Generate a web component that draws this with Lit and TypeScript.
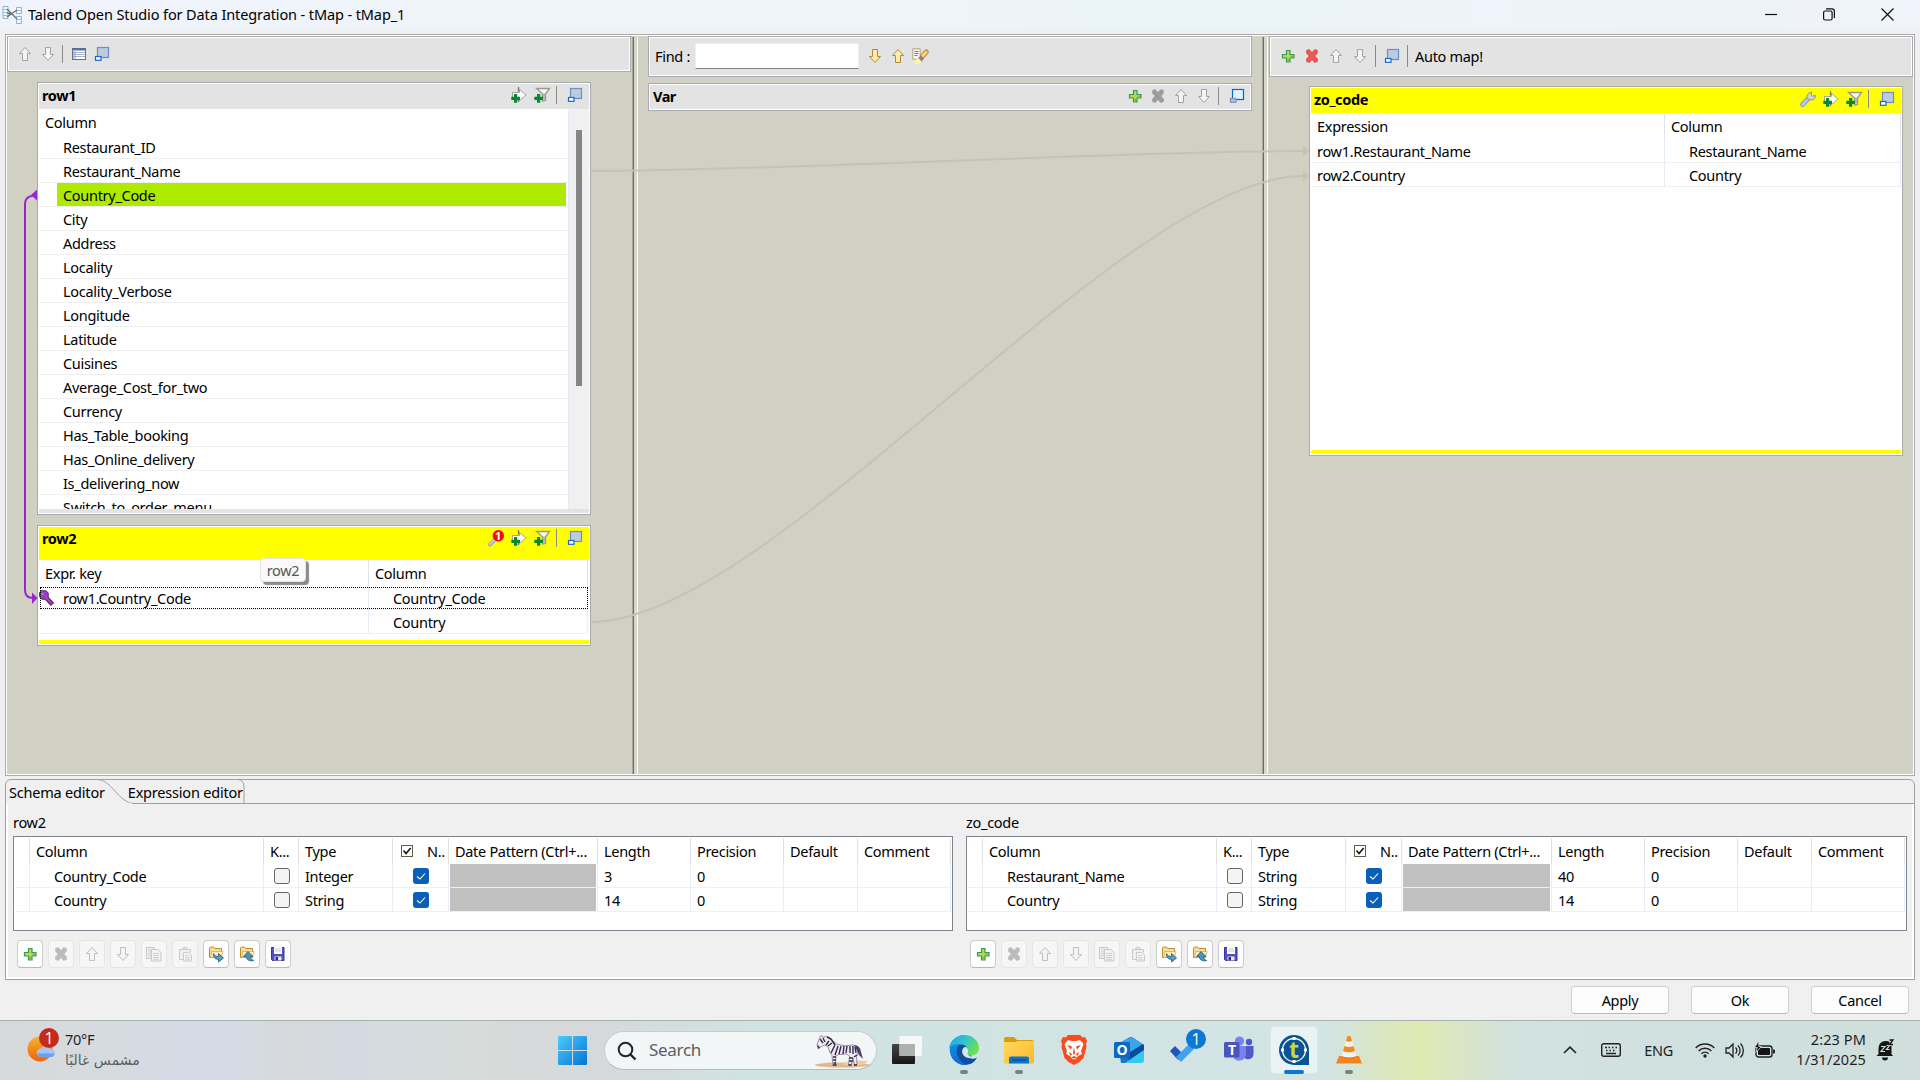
import { LitElement, html, svg, css, nothing, type TemplateResult, type SVGTemplateResult } from "lit";
import { customElement } from "lit/decorators.js";
import { classMap } from "lit/directives/class-map.js";

const icon = (body: SVGTemplateResult, w = 16, h = 16, box = `0 0 ${w} ${h}`) =>
  html`<svg class="ic" width=${w} height=${h} viewBox=${box}>${body}</svg>`;

const UP = "M8 1.5 13.5 7.5H10.5V14.5H5.5V7.5H2.5Z";
const DOWN = "M8 14.5 13.5 8.5H10.5V1.5H5.5V8.5H2.5Z";
const arrow = (d: string, fill = "#f4f4f4", stroke = "#a2a2a2") =>
  icon(svg`<path d=${d} fill=${fill} stroke=${stroke}/>`);
const upGray = () => arrow(UP);
const downGray = () => arrow(DOWN);
const upGold = () => arrow(UP, "#ffedb0", "#b8862b");
const downGold = () => arrow(DOWN, "#ffedb0", "#b8862b");

const plus = () => icon(svg`
  <path d="M6.500 2.500h3.500v4h4v3.500h-4v4H6.500v-4H2.500V6.500h4z" fill="#b9d84c" stroke="#3a9a5a" stroke-width="1.200"/>
  <path d="M8.200 11v2.500M10.500 8.300h3" stroke="#7db53f" stroke-width="1.500"/>`);
const CROSS = "M2.500 2.500 5.200 1.500 8 4.500 10.800 1.500 13.500 2.500 13.200 5.500 10.800 8 13.500 11 13.500 13.500 10.600 14.500 8 11.500 5.400 14.500 2.500 13.500 2.500 11 5.200 8 2.700 5.500Z";
const cross = (fill: string, stroke: string) => icon(svg`<path d=${CROSS} fill=${fill} stroke=${stroke} stroke-width=".7"/>`);
const restore = (bright = false) => icon(svg`
  <rect x="3.500" y="1.500" width="11" height="10" fill=${bright ? "#e0f2ff" : "#bccbe0"} stroke=${bright ? "#0b62d6" : "#6a8fc0"} stroke-width="1.200"/>
  <rect x="1.500" y="10.500" width="5.500" height="3.800" fill=${bright ? "#b4c1d6" : "#fff"} stroke=${bright ? "#7f93b5" : "#1668d0"} stroke-width="1.200"/>`);
const tableIcon = () => icon(svg`
  <rect x="1.500" y="2.500" width="13" height="11" fill="#fff" stroke="#61748f"/>
  <path d="M1 2.500h14v2H1z" fill="#53719b"/><path d="M2 4.500h3v8.500H2z" fill="#c5d2e6"/>
  <path d="M2 6.500h12M2 8.500h12M2 10.500h12" stroke="#8c9fbb" stroke-width=".8"/>`);
const GREEN = svg`<path d="M3 7h3.200v2.800H9V13H6.200v2.800H3V13H.3V9.800H3z" fill="#078a2e"/>`;
const addExpr = () => icon(svg`
  <path d="M1.500 5.500h7v-3L15 8l-6.500 5.500v-3h-7z" fill="#fff" stroke="#a3a39a"/>
  <path d="M7.500 0v4.500M7.500 12v3" stroke="#777" stroke-width="1.300"/>${GREEN}`);
const funnel = () => icon(svg`
  <path d="M2.500 1.500h13l-4 5.500v6.500l-3 .5V7z" fill="#f6f6f6" stroke="#99998f" stroke-width="1.300"/>
  <path d="M9 6.500h2v6H9z" fill="#b5b5b5"/>${GREEN}`);
const wrench = () => icon(svg`
  <path d="M2.500 13.500 8 8" stroke="#7f9bd6" stroke-width="4.800" stroke-linecap="round"/>
  <path d="M2.500 13.500 8 8" stroke="#b6c8f2" stroke-width="3" stroke-linecap="round"/>
  <path d="M7 7.500c-.6-3 1.200-6 4.500-6.500L11 3.800l1.600 1.400 3-.7c0 3.300-2.500 5-5.600 4.300z" fill="#d4d4cf" stroke="#90908a"/>`);
const wrenchBadge = () => html`<span class="badged">${icon(svg`
  <path d="M2 14.500 8 8.500" stroke="#8c9ac4" stroke-width="3.800" stroke-linecap="round"/>
  <path d="M2 14.300 8 8.300" stroke="#c5cde0" stroke-width="2.200" stroke-linecap="round"/>
  <circle cx="10.300" cy="5.800" r="5.700" fill="#f20d0d"/>`)}<b>1</b></span>`;
const highlighter = () => icon(svg`
  <path d="M.8.8h7.400v10.400H.8z" fill="#f2f5fb" stroke="#b7a46c"/>
  <path d="M2.500 3.500h4M2.500 5.500h4M2.500 7.500h3" stroke="#5d7fb5"/>
  <path d="M10.500 8 14.300 4" stroke="#c9852b" stroke-width="5" stroke-linecap="round"/>
  <path d="M10.700 7.600 14.100 4.200" stroke="#f8d38e" stroke-width="3" stroke-linecap="round"/>
  <path d="M6 10 9 7.500l3 3L9.500 14z" fill="#8d8378"/><path d="M1 15.500 6 9.500l3.500 4-2 2z" fill="#fff3a8"/>`, 17, 16);
const folderArrow = (up: boolean) => icon(svg`
  <path d="M1.500 11.500v-9.500l1-1h3l1.200 1.500h6.800v9z" fill="#f9dc98" stroke="#c08a2e"/>
  <path d="M3.500 5.500h11.500l-1.500 6h-10.500z" fill="#fdeebf" stroke="#d7a64c" stroke-width=".7"/>
  ${up
    ? svg`<path d="M9 5.500 14 10.500H11.500c0 2 1 3 3.200 4-4.200 1-7.200-.5-7.400-4H4.500z" fill="#4d93b8" stroke="#1d587c" stroke-width=".8"/>`
    : svg`<path d="M5.500 7.500c.5 2 2.500 3 5 3V7.500l5 4.500-5 4v-2.600C7 13.200 5 11 5.500 7.500z" fill="#5a9ebd" stroke="#1d587c" stroke-width=".8"/>`}`);
const save = () => icon(svg`
  <path d="M1.500 1.500h12.500v13h-11.500l-1-1z" fill="#5450c4" stroke="#38349c"/>
  <path d="M4 1h8v7H4z" fill="#fff"/><path d="M5 3h6M5 5h6" stroke="#c7c7d2"/>
  <path d="M4.500 10.500h7v4h-7z" fill="#e9e9f4"/><path d="M5.500 11h2.500v3.500H5.500z" fill="#2e2b86"/>`);
const copy = () => icon(svg`
  <path d="M6.500 12.500h-6v-11h8v2" fill="#eee" stroke="#b0b0b0"/><path d="M2 4h3M2 6h3M2 8h3M2 10h3" stroke="#bbb"/>
  <path d="M5.500 3.500h6.500l3 3v8.500H5.500z" fill="#f2f2f2" stroke="#b0b0b0"/><path d="M7 7.500h6M7 9.500h6M7 11.500h6M7 13.300h6" stroke="#bbb"/>`);
const paste = () => icon(svg`
  <path d="M6 13.500H2.500v-10h11v3" fill="#eee" stroke="#b4b4b4"/><path d="M5.500 3.500c0-3 5-3 5 0z" fill="#ddd" stroke="#b4b4b4"/>
  <path d="M6.500 6.500h5l3 2.500v6h-8z" fill="#f4f4f4" stroke="#b4b4b4"/><path d="M8 9.500h4M8 11.500h5M8 13.300h5" stroke="#c0c0c0"/>`);
const key = () => icon(svg`
  <path d="M6.500 7 13.500 14.500" stroke="#4b1d3c" stroke-width="4.400"/>
  <path d="M2 .8h5l2.200 2v4.500L7 9.200H3L.6 7V2.500z" fill="#9b3fc6" stroke="#5c2763"/>
  <path d="M6.500 7 13 14" stroke="#b43bd6" stroke-width="2.400"/><path d="M2.500 3h2v2h-2z" fill="#c07be0"/>`);

const sep = html`<i class="sep"></i>`;
const cell = (c: TemplateResult) => html`<span class="tool">${c}</span>`;

interface Field { name: string; type: string; length: string; }
interface Schema { title: string; fields: Field[]; }

const ROW1 = ["Restaurant_ID", "Restaurant_Name", "Country_Code", "City", "Address", "Locality", "Locality_Verbose",
  "Longitude", "Latitude", "Cuisines", "Average_Cost_for_two", "Currency", "Has_Table_booking",
  "Has_Online_delivery", "Is_delivering_now", "Switch_to_order_menu"];

const SCHEMAS: Schema[] = [
  { title: "row2", fields: [{ name: "Country_Code", type: "Integer", length: "3" }, { name: "Country", type: "String", length: "14" }] },
  { title: "zo_code", fields: [{ name: "Restaurant_Name", type: "String", length: "40" }, { name: "Country", type: "String", length: "14" }] },
];

@customElement("map-canvas")
class MapCanvas extends LitElement {
  static styles = css`
    :host { display: block; position: relative; height: 738px; background: #d1d1c3; }
    * { box-sizing: border-box; }
    .ic { display: block; flex: none; overflow: visible; }
    .grid { display: grid; grid-template-columns: 625px 6px 624px 6px 645px; height: 738px; }
    .sash { margin-top: 1px; background: linear-gradient(90deg, #a9a9a0 1px, #696969 1px 2px, #d6d6cc 2px 5px, #fff 5px); }
    .pane { display: flex; flex-direction: column; min-width: 0; }
    .bar { display: flex; align-items: center; background: #e3e3e3; border: 1px solid #a9abb1; box-shadow: inset 0 0 0 1px #fff; }
    .left .bar { height: 36px; padding-left: 5px; margin-right: 1px; }
    .left .bar .sep, .right .bar .sep { margin-right: 4px; }
    .mid { padding: 0 10px; gap: 6px; }
    .mid .find { height: 41px; padding: 0 0 2px 6px; }
    .find input { width: 164px; height: 26px; margin: 0 4px 0 5px; border: 1px solid #eee; border-bottom: 1px solid #808080; background: #fff; padding: 0; }
    .mid .var { height: 28px; padding: 0 4px 2px 4px; }
    .var .tool:last-child { margin-right: -1px; }
    .var .sep { margin-right: 6px; }
    .vt { letter-spacing: -.5px; }
    .right .bar { height: 41px; margin-left: 1px; padding: 0 0 2px 6px; }
    .right .bar .tool { width: 24px; }
    .right .bar .sep { height: 22px; }
    .right .bar .sep:last-of-type { margin-right: 7px; }
    .tool { display: flex; width: 23px; justify-content: center; flex: none; }
    .sep { width: 1px; height: 18px; background: #8a8a8a; margin: 0 6px 0 3px; flex: none; }
    .fill { flex: 1; }
    .panel { border: 1px solid #a9abb1; background: #fff; padding: 1px; display: flex; flex-direction: column; width: 554px; margin: 10px 0 0 30px; flex: none; }
    .row1 { height: 433px; } .row2 { height: 121px; } .zo { width: 594px; height: 370px; margin-left: 41px; margin-top: 9px; }
    .head { height: 25px; background: #e3e3e3; display: flex; align-items: center; padding: 0 3px 3px 3px; font-weight: 700; letter-spacing: -0.35px; flex: none; }
    .yellow { background: #ff0; }
    .row2 .head { height: 33px; padding-bottom: 11px; }
    .foot { height: 4px; background: #e3e3e3; flex: none; }
    .foot.yellow { background: #ff0; }
    .body { flex: 1; display: flex; overflow: hidden; min-height: 0; }
    .list { flex: 1; border-right: 1px solid #e4ecf7; }
    .cols { height: 26px; padding: 3px 0 0 6px; }
    .item { height: 24px; border-bottom: 1px solid #f0f0f0; padding-left: 18px; display: flex; }
    .item span { flex: 1; padding: 1px 0 0 6px; margin: 0 2px 0 0; line-height: 22px; }
    .item.sel span { background: #aeea00; }
    .scroll { width: 20px; background: #f0f0f0; padding: 21px 0 0 7px; }
    .thumb { width: 6px; height: 256px; background: #858585; }
    .two { flex: 1; position: relative; display: grid; align-content: start; grid-auto-rows: 24px; width: 549px; grid-template-columns: 330px 219px; grid-template-rows: 26px; }
    .zo .two { grid-template-columns: 354px 236px; width: 590px; }
    .two > div { border-bottom: 1px solid #f0f0f0; border-right: 1px solid #e4ecf7; padding-left: 24px; line-height: 23px; padding-top: 1px; }
    .two > .h { border-bottom: 0; border-right-color: #e3e3e3; padding: 1px 0 0 6px; line-height: 24px; }
    .two > .e { padding-left: 6px; }
    .focus { position: absolute; left: 1px; top: 27px; width: 548px; height: 22px; border: 1px dotted #000; }
    .key { position: absolute; left: 0; top: 30px; }
    .badged { position: relative; }
    .badged b { position: absolute; left: 7.500px; top: -2px; font: 700 11px/15px "Open Sans", sans-serif; color: #fff; }
    .tip { position: absolute; left: 253px; top: 522px; width: 46px; height: 24px; border: 1px solid #e4e4e4; border-radius: 4px; background: #f9f9f9; color: #575757; text-align: center; line-height: 22px; box-shadow: 3px 3px 1px #8a8a86; z-index: 3; }
    .links { position: absolute; left: 0; top: 0; pointer-events: none; }
  `;

  private tools(lead: TemplateResult | typeof nothing = nothing) {
    return html`<span class="fill"></span>${lead}${cell(addExpr())}${cell(funnel())}${sep}${cell(restore())}`;
  }

  render() {
    return html`
      <div class="grid">
        <div class="pane left">
          <div class="bar">${cell(upGray())}${cell(downGray())}${sep}${cell(tableIcon())}${cell(restore())}</div>
          <div class="panel row1">
            <div class="head">row1${this.tools()}</div>
            <div class="body">
              <div class="list">
                <div class="cols">Column</div>
                ${ROW1.map((n) => html`<div class=${classMap({ item: true, sel: n === "Country_Code" })}><span>${n}</span></div>`)}
              </div>
              <div class="scroll"><div class="thumb"></div></div>
            </div>
            <div class="foot"></div>
          </div>
          <div class="panel row2">
            <div class="head yellow">row2${this.tools(cell(wrenchBadge()))}</div>
            <div class="two">
              <div class="h">Expr. key</div><div class="h">Column</div>
              <div>row1.Country_Code</div><div>Country_Code</div>
              <div></div><div>Country</div>
              <span class="key">${key()}</span><span class="focus"></span>
            </div>
            <div class="foot yellow"></div>
          </div>
        </div>
        <div class="sash"></div>
        <div class="pane mid">
          <div class="bar find">Find :<input />${cell(downGold())}${cell(upGold())}${cell(highlighter())}</div>
          <div class="bar var"><b class="vt">Var</b><span class="fill"></span>${cell(plus())}${cell(cross("#9c9c9c", "#9c9c9c"))}${cell(upGray())}${cell(downGray())}${sep}${cell(restore(true))}</div>
        </div>
        <div class="sash"></div>
        <div class="pane right">
          <div class="bar">${cell(plus())}${cell(cross("#f0574f", "#c9474a"))}${cell(upGray())}${cell(downGray())}${sep}${cell(restore())}${sep}Auto map!</div>
          <div class="panel zo">
            <div class="head yellow">zo_code${this.tools(cell(wrench()))}</div>
            <div class="two">
              <div class="h">Expression</div><div class="h">Column</div>
              <div class="e">row1.Restaurant_Name</div><div>Restaurant_Name</div>
              <div class="e">row2.Country</div><div>Country</div>
            </div>
            <div class="foot yellow"></div>
          </div>
        </div>
      </div>
      <div class="tip">row2</div>
      <svg class="links" width="1906" height="738" viewBox="7 36 1906 738">
        <g fill="none" stroke="#c4c4b5" stroke-width="2">
          <path d="M591 171C771 171 1123 151 1303 151"/><path d="M591 622C771 622 1123 176 1303 176"/>
        </g>
        <path d="M1303 145.500 1309 151 1303 156.500ZM1303 170.500 1309 176 1303 181.500Z" fill="#c4c4b5"/>
        <path d="M34 195.500C28 196 25 199 25 204V590C25 595 28 598 33 598" fill="none" stroke="#9b26d0" stroke-width="2"/>
        <path d="M37 189.500V200.500L31 195ZM32 592.500 37.500 598 32 604Z" fill="#9b26d0"/>
      </svg>`;
  }
}

@customElement("schema-editor")
class SchemaEditor extends LitElement {
  static properties = { schema: { attribute: false }, wide: { type: Boolean, reflect: true } };
  declare schema: Schema;
  declare wide: boolean;

  static styles = css`
    :host { display: block; width: 940px; --date: 149px; }
    :host([wide]) { width: 941px; --date: 150px; }
    * { box-sizing: border-box; }
    .ic { display: block; overflow: visible; flex: none; }
    .title { height: 23px; line-height: 18px; }
    .table { height: 95px; border: 1px solid #7f858f; background: #fff; padding: 1px; }
    .row { display: grid; grid-template-columns: 15px 234px 35px 94px 56px var(--date) 93px 93px 74px 93px; height: 24px; }
    .row > div { border-right: 1px solid #e8eef8; border-bottom: 1px solid #f0f0f0; padding-left: 6px; line-height: 24px; white-space: nowrap; overflow: hidden; }
    .row.h { height: 26px; }
    .row.h > div { border-right-color: #e1e1e1; border-bottom: 0; line-height: 26px; }
    .row > .n { padding-left: 24px; }
    .row > .gray { padding: 0 1px; }
    .gray i { display: block; height: 100%; background: #c0c0c0; }
    .row > .flag { display: flex; align-items: center; gap: 14px; padding-left: 8px; }
    .row > .chk { padding: 4px 0 0 10px; }
    .row > .chk.on { padding-left: 20px; }
    .box { width: 16px; height: 16px; border: 1px solid #666; border-radius: 3px; background: #f4f4f4; display: block; }
    .on .box { border: 0; background: #0a5fb8; }
    .tools { display: flex; gap: 5px; padding: 9px 0 0 4px; }
    .btn { width: 26px; height: 28px; border: 1px solid #cdcdcd; border-bottom-color: #b8b8b8; border-radius: 4px; background: #fdfdfd; display: flex; align-items: center; justify-content: center; }
    .btn.off { border-color: #e6e6e6; background: #f6f6f6; }
    .btn.off .ic { opacity: .65; }
  `;

  render() {
    const buttons = [plus(), cross("#9c9c9c", "#9c9c9c"), upGray(), downGray(), copy(), paste(), folderArrow(false), folderArrow(true), save()];
    const headCheck = html`<svg class="ic" width="12" height="12" viewBox="0 0 12 12"><rect x=".5" y=".5" width="11" height="11" fill="#fff" stroke="#5f6048"/><path d="M2.500 5.500 5 8.500 9.700 3" fill="none" stroke="#111" stroke-width="1.500"/></svg>`;
    return html`
      <div class="title">${this.schema.title}</div>
      <div class="table">
        <div class="row h"><div></div><div>Column</div><div>K...</div><div>Type</div><div class="flag">${headCheck}<span>N..</span></div><div>Date Pattern (Ctrl+...</div><div>Length</div><div>Precision</div><div>Default</div><div>Comment</div></div>
        ${this.schema.fields.map((f) => html`<div class="row"><div></div><div class="n">${f.name}</div><div class="chk"><span class="box"></span></div><div>${f.type}</div>
          <div class="chk on"><span class="box"><svg class="ic" width="16" height="16"><path d="M4 8.500 7 11 12 5.500" fill="none" stroke="#fff" stroke-width="1.100"/></svg></span></div>
          <div class="gray"><i></i></div><div>${f.length}</div><div>0</div><div></div><div></div></div>`)}
      </div>
      <div class="tools">${buttons.map((c, i) => html`<span class=${classMap({ btn: true, off: i > 0 && i < 6 })}>${c}</span>`)}</div>`;
  }
}

@customElement("task-bar")
class TaskBar extends LitElement {
  static styles = css`
    :host { display: block; height: 60px; border-top: 1px solid #a9b1b1; box-sizing: border-box; color: #1f1f1f;
      background: linear-gradient(90deg, #d7dada 0, #d5dbe4 170px, #d5dbe7 220px, #d6d9dc 290px, #d5dae2 350px, #d6dcda 460px, #d6d9da 600px, #d0e3e3 760px, #d2e4e3 1330px, #dbe6c0 1385px, #e0eab3 1420px, #d9e5c6 1460px, #d1e2df 1515px, #cfe0e0 1720px, #d0dfdb 1920px); }
    * { box-sizing: border-box; }
    svg { display: block; overflow: visible; flex: none; }
    .bar { display: flex; height: 59px; }
    .weather { width: 558px; display: flex; padding: 7px 0 0 27px; }
    .wicon { width: 38px; position: relative; padding-top: 1px; }
    .wt { line-height: 22px; } .wt span { display: block; }
    .wt .ar { font: 14px/20px "DejaVu Sans", sans-serif; color: #5c5f60; letter-spacing: 0.1px; }
    .start { width: 46px; padding-top: 15px; }
    .search { width: 273px; height: 39px; margin-top: 10px; border-radius: 20px; background: #f2f6f7; border: 1px solid #c4cfd0; border-bottom-color: #b2bcbd; display: flex; align-items: center; padding: 0 7px 0 12px; font-size: 17px; color: #5c5f60; }
    .search span { flex: 1; padding: 0 0 2px 12px; }
    .apps { display: flex; margin-left: 8px; padding-top: 5px; gap: 7px; }
    .app { width: 48px; height: 48px; display: flex; align-items: center; justify-content: center; position: relative; border-radius: 5px; }
    .app:first-child { left: -2px; }
    .app.active { background: #eaf3f3; border: 1px solid #dde9e9; }
    .app i { position: absolute; bottom: 0; left: 20px; width: 8px; height: 4px; border-radius: 2px; background: #7b8282; }
    .app.active i { left: 13px; bottom: -1px; width: 20px; background: #0a78d4; }
    .num { position: absolute; color: #fff; font: 16px/20px "Open Sans", sans-serif; width: 20px; height: 20px; border-radius: 50%; text-align: center; }
    .todo .num { background: #0a78d4; right: 2px; top: 3px; }
    .wicon .num { background: #c42b1c; left: 12px; top: 0; }
    .letter { position: absolute; color: #fff; font: 700 14px/16px "Open Sans", sans-serif; left: 11px; top: 16px; width: 12px; text-align: center; letter-spacing: 0; }
    .tletter { position: absolute; color: #c9d83a; font: 700 23px/24px "Open Sans", sans-serif; left: 18px; top: 10px; }
    .tray { margin-left: auto; display: flex; align-items: center; padding-right: 22px; padding-bottom: 1px; }
    .chev { margin-right: 24px; } .kbd { margin-right: 23px; } .wifi { margin-left: 22px; } .vol, .bat { margin-left: 10px; } .bell { margin-left: 3px; }
    .clock { width: 91px; text-align: right; line-height: 20px; letter-spacing: 0.1px; margin: -3px 7px 0 0; }
  `;

  render() {
    return html`<div class="bar">
      <div class="weather">
        <div class="wicon"><svg width="30" height="38"><defs><linearGradient id="sun" x1="0" y1="0" x2="0" y2="1"><stop stop-color="#f3b72b"/><stop offset="1" stop-color="#f0620d"/></linearGradient></defs>
          <circle cx="13" cy="20" r="12.500" fill="url(#sun)"/><path d="M14 28a4.200 4.200 0 0 1 0-8.400 5.400 5.400 0 0 1 9.600.4 4 4 0 0 1 .4 8z" fill="#a3c4f7"/><path d="M14 28a4 4 0 0 1-3.500-3.500h17A4 4 0 0 1 24 28z" fill="#6f9ded"/></svg><span class="num">1</span></div>
        <div class="wt"><span>70°F</span><span class="ar">مشمس غالبًا</span></div>
      </div>
      <div class="start"><svg width="29" height="29"><defs><linearGradient id="win" x1="0" y1="0" x2="1" y2="1"><stop stop-color="#4bcdfb"/><stop offset="1" stop-color="#0673d3"/></linearGradient></defs>
        <path d="M0 1a1 1 0 0 1 1-1h13v14H0zM15 0h13a1 1 0 0 1 1 1v13H15zM0 15h14v14H1a1 1 0 0 1-1-1zM15 15h14v13a1 1 0 0 1-1 1H15z" fill="url(#win)"/></svg></div>
      <div class="search">
        <svg width="20" height="20"><circle cx="8.500" cy="8.500" r="6.800" fill="none" stroke="#262626" stroke-width="2"/><path d="M13.500 13.500 18.500 18.500" stroke="#262626" stroke-width="2.400"/></svg>
        <span>Search</span>
        <svg width="54" height="34" viewBox="0 0 54 34">
          <ellipse cx="27" cy="31" rx="27" ry="2.600" fill="#e2b98b"/><path d="M26 30q14-5 27-3-4 5-17 5z" fill="#edcba2"/>
          <path d="M2 11 4 5 6 1.500l2 1.500q4-1.500 7 1 4 3 6 6 9 3 17 1 5 1 5.500 7l-2 5 .5 8h-2.500l-1.500-7-2 7H33.500l1-9-3-2-8 .5-2.500 1-.5 10H18l-1-10q-3-3-4-9L9 11l-5 3z" fill="#efeaf2" stroke="#5d5071" stroke-width=".6"/>
          <path d="M12 3l4 2 4 6M8 4l2 4M5 5l3 4M14 7l-3 4M17 9l-4 3M20 11l-4 8M23 12l-3 9M26 12l-2 8M29 12l-1 8M32 12l-1 7M35 12v7M38 12v8M40 13l1 6M18 23h3M18 26h3M18.500 29h2.500M34 24h4M34 27h4M39 23l3-2" stroke="#352a49" stroke-width="1.400" fill="none"/>
          <path d="M2 11l2 1 1 2-2 1z" fill="#40334f"/><path d="M39 11q6 0 7 7l2 7-4-4q-2-4-5-10z" fill="#4f3d70"/><path d="M18 31h3.500M33.500 31h3M39 31h3" stroke="#352a49" stroke-width="1.400"/></svg>
      </div>
      <div class="apps">
        <div class="app"><svg width="30" height="30"><defs><linearGradient id="dk" x1="0" y1="0" x2="0" y2="1"><stop stop-color="#444"/><stop offset="1" stop-color="#171717"/></linearGradient></defs><rect y="9" width="23" height="20" rx="1" fill="url(#dk)"/><rect x="7.500" y="1" width="22.500" height="20" rx="1" fill="#f6f7f7"/><rect x="7.500" y="9" width="15.500" height="12" fill="#aeb1b1"/></svg></div>
        <div class="app"><svg width="30" height="30" viewBox="0 0 30 30"><defs><linearGradient id="eg" x1="0" y1="0" x2="1" y2=".5"><stop stop-color="#1c9ee8"/><stop offset=".5" stop-color="#2fc3d2"/><stop offset="1" stop-color="#6be052"/></linearGradient><linearGradient id="eb" x1="0" y1="0" x2="0" y2="1"><stop stop-color="#1a9be8"/><stop offset="1" stop-color="#0c6bd0"/></linearGradient></defs>
          <path d="M15 0A15 15 0 1 0 24 27.500L21 15Z" fill="url(#eb)"/><path d="M0 14C1 5 8 0 15 0c9 0 15 6 15 13 0 5-4 7.500-8 7.500-3 0-5-1-4-3 2-4-1-8.500-7-8.500C5 9 1 11 0 14z" fill="url(#eg)"/>
          <path d="M9 11c-3 6-1 14 8 18.500 6 0 9-3 11-7-4 2.500-10 1.500-12-3-1.500-4-.5-6.500 1-7.500-2-2.500-5-3-8-1z" fill="#114f9e"/><path d="M15.500 12c-3.500 2-3.300 8.500 2 10.500 3.500 1.300 7 .8 10.300-.8-3.300.7-7.300 0-8.800-2-1.200-1.600.6-2.500 0-5-.4-1.700-2-3-3.500-2.700z" fill="#d9e9ea"/></svg><i></i></div>
        <div class="app"><svg width="30" height="28" viewBox="0 0 30 28"><defs><linearGradient id="fo" x1="0" y1="0" x2="1" y2="1"><stop stop-color="#ffda60"/><stop offset="1" stop-color="#f9b82c"/></linearGradient></defs><path d="M0 3a2 2 0 0 1 2-2h8l3 3h15a2 2 0 0 1 2 2v6H0z" fill="#dc9c07"/><path d="M0 6h12l2-1h16v21a1.500 1.500 0 0 1-1.500 1.500h-27A1.500 1.500 0 0 1 0 26z" fill="url(#fo)"/><path d="M5 27.500v-5a2 2 0 0 1 2-2h16a2 2 0 0 1 2 2v5z" fill="#0e74c8"/><path d="M8 24h14" stroke="#08508e" stroke-width="1.400"/></svg><i></i></div>
        <div class="app"><svg width="26" height="30" viewBox="0 0 26 30"><path d="M7 0h12l2.500 2.500L24 2l2 4-1 3 .5 3-3 11-4 4L13 30l-5.500-3-4-4-3-11L1 9 0 6l2-4 2.500.5z" fill="#fb4a1c"/><path d="M7 5l4 1h4l4-1 3.500 4-2.500 7 1 3-4 2-2 2.500-2 1-2-1L9 21l-4-2 1-3-2.500-7z" fill="#fff"/><path d="M6 10l5 1.500-1 3zM20 10l-5 1.500 1 3zM13 12l1 6-1 2-1-2zM8 17l3.500 2.500L9 20.500zM18 17l-3.500 2.500 2.500 1zM10 22.500l3-1.500 3 1.500-3 1z" fill="#f2411b"/></svg></div>
        <div class="app"><svg width="30" height="28" viewBox="0 0 30 28"><path d="M4 8 16 1h2l12 8v15l-6 3H7z" fill="#1976c9"/><path d="M4 8 17 1l12 7-13 9H4z" fill="#3ba5ec"/><path d="M13 18 29 8l1 2v5L15 24z" fill="#0a4c9c"/><path d="M11 27 30 14v10a3 3 0 0 1-3 3z" fill="#35c9f2"/><rect y="6" width="16" height="16" rx="1.500" fill="#0c68c6"/></svg><span class="letter">O</span></div>
        <div class="app todo"><svg width="30" height="28" viewBox="0 0 30 28"><path d="M1 15l5-5 8 8-5 6z" fill="#1d57c0"/><path d="M7 21 25 3l5 5L12 26z" fill="#44a1ef"/></svg><span class="num">1</span></div>
        <div class="app"><svg width="30" height="28" viewBox="0 0 30 28"><circle cx="15.500" cy="5" r="4.600" fill="#7b83eb"/><circle cx="25" cy="6" r="3.200" fill="#5059c9"/><path d="M20 10h9.500v8a5.500 5.500 0 0 1-9 4z" fill="#5059c9"/><path d="M9 10h13v9a7 7 0 0 1-13 2z" fill="#7b83eb"/><rect y="6" width="15.500" height="15.500" rx="1.500" fill="#4b53bc"/></svg><span class="letter">T</span></div>
        <div class="app active"><svg width="30" height="30"><path d="M15 0a15 15 0 0 1 15 15v15H15A15 15 0 0 1 15 0z" fill="#0a5394"/><circle cx="15" cy="15" r="11.500" fill="none" stroke="#fff" stroke-width="1.300"/><path d="M13.500 3.500h3M13.500 26.500h3M3.500 13.500v3M26.500 13.500v3" stroke="#fff" stroke-width="3"/></svg><span class="tletter">t</span><i></i></div>
        <div class="app"><svg width="26" height="30" viewBox="0 0 26 30"><path d="M3 21h20l3 7.500H0z" fill="#f58220"/><path d="M11.500 1h3L21 23q-8 4-16 0z" fill="#f2f2f2"/><path d="M11.500 1h3l1.500 5q-3 1.500-6 0zM8.500 11q4.500 2 9 0l1.500 5q-6 2.500-12 0z" fill="#f28a1d"/><path d="M5.500 21q7.500 3 15 0l.5 2q-8 4-16 0z" fill="#e8760f"/></svg><i></i></div>
      </div>
      <div class="tray">
        <svg class="chev" width="14" height="8"><path d="M1 7 7 1.200 13 7" fill="none" stroke="#222" stroke-width="1.600"/></svg>
        <svg class="kbd" width="20" height="14"><rect x=".7" y=".7" width="18.600" height="12.600" rx="2" fill="none" stroke="#222" stroke-width="1.400"/><path d="M4 4.500h2M7.500 4.500h1.500M11 4.500h1.500M14.500 4.500h1.500M5 7.500h1.500M8.500 7.500H10M12 7.500h1.500M5 10.500h10" stroke="#222" stroke-width="1.400"/></svg>
        <span>ENG</span>
        <svg class="wifi" width="20" height="16"><g fill="none" stroke="#222" stroke-width="1.500"><path d="M.7 6a13 13 0 0 1 18.600 0"/><path d="M3.600 9a9 9 0 0 1 12.800 0"/><path d="M6.400 11.800a5.200 5.200 0 0 1 7.200 0"/></g><circle cx="10" cy="14" r="1.700" fill="#222"/></svg>
        <svg class="vol" width="20" height="17"><g fill="none" stroke="#222" stroke-width="1.300"><path d="M1 6h3l4-4v13l-4-4H1z"/><path d="M10.500 5.500a4 4 0 0 1 0 6M13 3.500a7 7 0 0 1 0 10M15.500 1.500a10 10 0 0 1 0 14"/></g></svg>
        <svg class="bat" width="20" height="16"><rect x="1" y="4" width="16" height="11" rx="2.500" fill="none" stroke="#222" stroke-width="1.400"/><rect x="3" y="6" width="12" height="7" rx="1" fill="#151515"/><path d="M18 7.500h1a1 1 0 0 1 1 1v2a1 1 0 0 1-1 1h-1z" fill="#222"/><path d="M3.800-1-.5 5.500H2.200L1 10.500l5.500-6H3.800z" fill="#151515" stroke="#d0e0de" stroke-width=".8"/></svg>
        <div class="clock">2:23 PM<br />1/31/2025</div>
        <svg class="bell" width="22" height="22"><path d="M2.500 15V9a7 7 0 0 1 7-7q3 0 4 1v4h2v8l1.500 2H.5z" fill="#151515"/><path d="M6 18.500h6a3 3 0 0 1-6 0z" fill="#151515"/><path d="M5 7.500h4l-4 5h4M10.500 6.500h3l-3 4h3" stroke="#d0e0de" stroke-width="1.200" fill="none"/><path d="M13.500 1h3.500l-3.500 4.500h3.500" stroke="#151515" stroke-width="1.300" fill="none"/></svg>
      </div>
    </div>`;
  }
}

@customElement("app-root")
class AppRoot extends LitElement {
  static styles = css`
    :host { display: flex; flex-direction: column; width: 1920px; height: 1080px; overflow: hidden; background: #f0f0f0; color: #000; font: 14.500px/20px "Noto Sans", "Open Sans", sans-serif; letter-spacing: -0.3px; }
    * { box-sizing: border-box; }
    svg { display: block; overflow: visible; }
    .title { height: 29px; background: linear-gradient(90deg, #f0f3fb 0, #eff3fa 960px, #ebf4f7 1100px, #ecf4f7 1350px, #eff3fb 1480px, #eef3f8 1700px, #f0f3fb); display: flex; align-items: center; padding: 0 26px 0 2px; flex: none; }
    .title > span { flex: 1; padding: 0 0 2px 6px; letter-spacing: -0.11px; }
    .ctrl { display: flex; gap: 46px; align-items: center; }
    .work { height: 991px; padding: 5px 5px 0; }
    .frame { border: 1px solid #a9abb1; padding: 1px; background: #fff; height: 742px; }
    .tabs { position: relative; margin-top: 3px; height: 201px; border: 1px solid #a0a0a0; border-radius: 6px 6px 0 0; }
    .strip { height: 24px; display: flex; padding: 2px 0 0 3px; border-bottom: 1px solid #a0a0a0; letter-spacing: -0.2px; }
    .strip span + span { margin-left: 23px; }
    .strip svg { position: absolute; left: -1px; top: -1px; }
    .inner { height: 175px; border: 2px solid #fff; border-top: 0; display: flex; gap: 13px; padding: 9px 0 0 5px; }
    .foot { display: flex; justify-content: flex-end; gap: 22px; padding: 6px 6px 0 0; }
    .foot button { width: 98px; height: 28px; border: 1px solid #d0d0d0; border-bottom-color: #bbb; border-radius: 4px; background: #fdfdfd; font: inherit; letter-spacing: inherit; color: #000; padding: 0; }
  `;

  render() {
    return html`
      <div class="title">
        <svg width="20" height="20" viewBox="0 0 20 20"><g fill="#f4f8fc" stroke="#8db4d4"><path d="M1 1.500h5v12H1zM14.500 2.500h5v6h-5zM14.500 11.500h5v7h-5z"/></g><path d="M1 4.500h5M1 7.500h5M1 10.500h5M14.500 5.500h5M14.500 14.500h5" stroke="#9dbfdd"/><path d="M5 4 15 14M5 12 15 5M5 8l4 1" stroke="#6d6d6d" stroke-width="1.300" fill="none"/></svg>
        <span>Talend Open Studio for Data Integration - tMap - tMap_1</span>
        <div class="ctrl">
          <svg width="12" height="12"><path d="M0 5.500h12" stroke="#111" stroke-width="1.200"/></svg>
          <svg width="12" height="13"><rect x=".6" y="3" width="8.500" height="9" rx="1.500" fill="none" stroke="#111" stroke-width="1.200"/><path d="M3 .8h6a2.500 2.500 0 0 1 2.400 2.500V10" fill="none" stroke="#111" stroke-width="1.200"/></svg>
          <svg width="13" height="13"><path d="M.5.5 12.500 12.500M12.500.5.5 12.500" stroke="#111" stroke-width="1.200"/></svg>
        </div>
      </div>
      <div class="work">
        <div class="frame"><map-canvas></map-canvas></div>
        <div class="tabs">
          <div class="strip"><span>Schema editor</span><span>Expression editor</span>
            <svg width="242" height="26"><path d="M92 .5C108 1 113 24.500 130 24.500" fill="none" stroke="#a0a0a0"/><path d="M232 .5q7 0 7 7V24" fill="none" stroke="#a0a0a0"/><path d="M1 24.500H127" stroke="#f0f0f0" stroke-width="1.500"/></svg>
          </div>
          <div class="inner">${SCHEMAS.map((s, i) => html`<schema-editor .schema=${s} ?wide=${i === 1}></schema-editor>`)}</div>
        </div>
        <div class="foot"><button>Apply</button><button>Ok</button><button>Cancel</button></div>
      </div>
      <task-bar></task-bar>`;
  }
}
